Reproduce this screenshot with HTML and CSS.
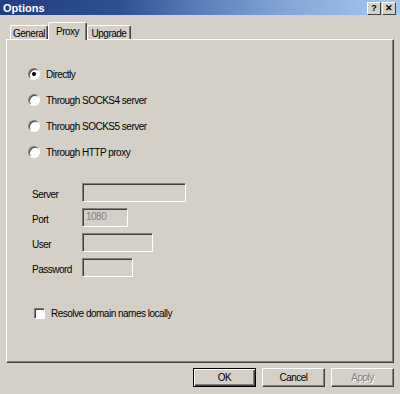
FILE: index.html
```html
<!DOCTYPE html>
<html lang="en">
<head>
  <meta charset="UTF-8" />
  <title>Options</title>
  <link rel="stylesheet" href="styles.css">
</head>
<body>

  <div class="titlebar">
    <span class="title">Options</span>
    <div class="title-buttons">
      <span class="tbtn">?</span>
      <span class="tbtn">✕</span>
    </div>
  </div>

  <div class="tabs">
    <div class="tab">General</div>
    <div class="tab active">Proxy</div>
    <div class="tab">Upgrade</div>
  </div>

  <div class="panel">
    <div class="options">
      <label class="option"><span class="radio checked"></span>Directly</label>
      <label class="option"><span class="radio"></span>Through SOCKS4 server</label>
      <label class="option"><span class="radio"></span>Through SOCKS5 server</label>
      <label class="option"><span class="radio"></span>Through HTTP proxy</label>
    </div>

    <!-- proxy fields, disabled while "Directly" is chosen -->
    <div class="fields">
      <span class="field-label">Server</span>
      <span class="input server"></span>
      <span class="field-label">Port</span>
      <span class="input port">1080</span>
      <span class="field-label">User</span>
      <span class="input user"></span>
      <span class="field-label">Password</span>
      <span class="input password"></span>
    </div>

    <label class="check-row"><span class="checkbox"></span>Resolve domain names locally</label>
  </div>

  <div class="buttons">
    <div class="btn default">OK</div>
    <div class="btn">Cancel</div>
    <div class="btn disabled">Apply</div>
  </div>

</body>
</html>
```

FILE: styles.css
```css
body {
  margin: 0;
  width: 400px;
  height: 394px;
  background: #d4d0c8;
  font-family: "Liberation Sans", Arial, sans-serif;
  font-size: 10px;
  letter-spacing: -0.5px;
  color: #000;
  overflow: hidden;
}

.titlebar {
  height: 15px;
  display: flex;
  align-items: center;
  justify-content: space-between;
  padding: 0 4px 0 3px;
  background: linear-gradient(to right, #213e7e, #2f4f92 30%, #5c7fba 50%, #86a6d6 72%, #a6c8ee);
}

.title {
  color: #fff;
  font-weight: bold;
  font-size: 11px;
  letter-spacing: 0;
}

.title-buttons {
  display: flex;
  gap: 1px;
  margin-top: 1px;
}

.tbtn {
  width: 12px;
  height: 11px;
  display: flex;
  align-items: center;
  justify-content: center;
  background: #d4d0c8;
  border: 1px solid;
  border-color: #fff #404040 #404040 #fff;
  font-size: 9px;
  font-weight: bold;
  letter-spacing: 0;
  line-height: 1;
}

.tabs {
  display: flex;
  align-items: flex-end;
  height: 18px;
  margin-top: 7px;
  padding-left: 10px;
}

.tab {
  height: 14px;
  margin-bottom: 1px;
  box-sizing: border-box;
  padding-top: 2px;
  text-align: center;
  border-top: 1px solid #fff;
  border-left: 1px solid #fff;
  border-right: 1px solid #404040;
  border-radius: 2px 2px 0 0;
  box-shadow: inset -1px 0 #808080;
  background: #d4d0c8;
}

.tab:nth-child(1) { width: 38px; }
.tab:nth-child(3) { width: 44px; }

.tab.active {
  width: 39px;
  height: 18px;
  margin-bottom: 0;
  padding-top: 3px;
  position: relative;
  z-index: 1;
}

.panel {
  height: 324px;
  margin: -1px 6px 0 6px;
  box-sizing: border-box;
  border: 1px solid;
  border-color: #fff #404040 #404040 #fff;
  box-shadow: inset -1px -1px #808080;
  padding: 21px 0 0 21px;
}

.options {
  display: flex;
  flex-direction: column;
}

.option {
  height: 26px;
  display: flex;
  align-items: center;
  gap: 6px;
}

.radio {
  width: 10px;
  height: 10px;
  border-radius: 50%;
  background: #fff;
  border: 1px solid;
  border-color: #808080 #fff #fff #808080;
  box-shadow: inset 1px 1px #404040;
  position: relative;
}

.radio.checked::after {
  content: "";
  position: absolute;
  top: 3px;
  left: 3px;
  width: 4px;
  height: 4px;
  border-radius: 50%;
  background: #000;
}

.fields {
  display: grid;
  grid-template-columns: 50px auto;
  grid-auto-rows: 19px;
  row-gap: 6px;
  align-items: center;
  margin: 18px 0 0 4px;
}

.field-label {
  padding-top: 3px;
}

.input {
  height: 19px;
  box-sizing: border-box;
  border: 1px solid;
  border-color: #808080 #fff #fff #808080;
  box-shadow: inset 1px 1px #404040;
  padding: 2px 0 0 3px;
  color: #808080;
}

.server { width: 104px; }
.port { width: 46px; }
.user { width: 71px; }
.password { width: 51px; }

.check-row {
  display: flex;
  align-items: center;
  gap: 6px;
  margin: 31px 0 0 6px;
}

.checkbox {
  width: 9px;
  height: 9px;
  background: #fff;
  border: 1px solid;
  border-color: #808080 #fff #fff #808080;
  box-shadow: inset 1px 1px #404040;
}

.buttons {
  display: flex;
  justify-content: flex-end;
  gap: 6px;
  margin-top: 5px;
  padding-right: 6px;
}

.btn {
  width: 63px;
  height: 19px;
  box-sizing: border-box;
  display: flex;
  align-items: center;
  justify-content: center;
  border: 1px solid;
  border-color: #fff #404040 #404040 #fff;
  box-shadow: inset -1px -1px #808080;
}

.btn.default {
  border-color: #000;
  box-shadow: inset 1px 1px #fff, inset -1px -1px #404040, inset -2px -2px #808080;
}

.btn.disabled {
  color: #808080;
  text-shadow: 1px 1px #fff;
}
```
